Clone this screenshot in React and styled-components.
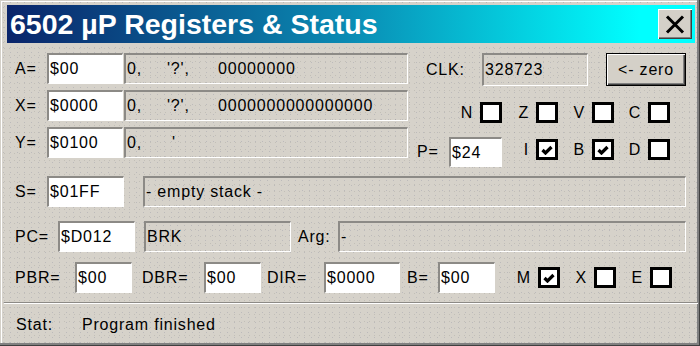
import React from 'react'
import styled, {createGlobalStyle} from 'styled-components'

const GlobalStyle = createGlobalStyle`
  html, body { margin: 0; padding: 0; background: #d4d0c8; }
  body { font-family: "Liberation Sans", Arial, sans-serif; }
`

const dither = `
  background-color: #d6d2ca;
  background-image:
    radial-gradient(circle, rgba(140,140,160,0.35) 0.6px, transparent 0.9px),
    radial-gradient(circle, rgba(150,145,140,0.3) 0.6px, transparent 0.9px);
  background-size: 7px 5px, 5px 7px;
  background-position: 0 0, 2px 3px;
`

const Window = styled.div`
  width: 700px;
  height: 346px;
  box-sizing: border-box;
  padding: 5px 5px 0 7px;
  display: flex;
  flex-direction: column;
  ${dither}
  box-shadow: inset -1px -1px #404040, inset -3px -3px #808080, inset 1px 1px #d4d0c8, inset 2px 2px #fff;
`

const TitleBar = styled.div`
  height: 38px;
  display: flex;
  align-items: center;
  justify-content: space-between;
  padding: 0 3px;
  background: linear-gradient(90deg, #0a246a 0%, #0a8cb4 50%, #00ffff 92%);
`

const TitleText = styled.span`
  color: #fff;
  font-weight: bold;
  font-size: 28.5px;
  line-height: 38px;
`

const CloseButton = styled.div`
  width: 34px;
  height: 30px;
  background: #d4d0c8;
  box-shadow: inset 1px 1px #fff, inset -1px -1px #404040, inset -2px -2px #808080;
  display: flex;
  align-items: center;
  justify-content: center;
`

const Body = styled.div`
  padding: 10px 9px 0 8px;
  display: flex;
  flex-direction: column;
`

const Top = styled.div`
  display: flex;
  align-items: flex-start;
`

const LeftCol = styled.div`
  width: 394px;
  display: flex;
  flex-direction: column;
  gap: 6px;
`

const Row = styled.div`
  display: flex;
  height: ${p => p.$h || 31}px;
  margin-top: ${p => p.$mt || 0}px;
  align-items: stretch;
`

const Label = styled.span`
  width: ${p => p.$w}px;
  margin-left: ${p => p.$ml || 0}px;
  flex-shrink: 0;
  display: flex;
  align-items: center;
  font-size: 16px;
  letter-spacing: 0.8px;
  color: #000;
`

const sunken = `
  box-sizing: border-box;
  border-top: 2px solid #8c8a86;
  border-left: 2px solid #8c8a86;
  border-bottom: 1px solid #fff;
  border-right: 1px solid #fff;
`

const ValueBox = styled.div`
  ${sunken}
  width: ${p => p.$w}px;
  flex-shrink: 0;
  background: #fff;
  display: flex;
  align-items: center;
  padding-left: 1px;
  font-size: 16px;
  letter-spacing: 0.8px;
  color: #000;
`

const Field = styled.div`
  ${sunken}
  ${dither}
  width: ${p => (p.$w ? p.$w + 'px' : 'auto')};
  flex: ${p => (p.$w ? '0 0 auto' : '1')};
  margin-left: ${p => p.$ml || 0}px;
  display: flex;
  align-items: center;
  padding-left: 1px;
  font-size: 16px;
  letter-spacing: 0.8px;
  color: #000;
  white-space: pre;
  overflow: hidden;
`

const Cell = styled.span`
  width: ${p => p.$w}px;
  padding-left: ${p => p.$pl || 0}px;
  box-sizing: border-box;
  flex-shrink: 0;
`

const RightCol = styled.div`
  width: 269px;
  margin-left: 9px;
  display: flex;
  flex-direction: column;
`

const ZeroButton = styled.div`
  width: 80px;
  height: 33px;
  margin-left: 18px;
  box-sizing: border-box;
  border: 1px solid #000;
  background: #d4d0c8;
  box-shadow: inset 1px 1px #fff, inset -1px -1px #404040, inset -2px -2px #808080;
  display: flex;
  align-items: center;
  justify-content: center;
  font-size: 16px;
  letter-spacing: 0.8px;
`

const FlagRow = styled.div`
  display: flex;
  justify-content: flex-end;
  align-items: ${p => p.$align || 'center'};
  padding-right: ${p => p.$pr || 0}px;
  margin-top: ${p => p.$mt || 0}px;
  margin-left: ${p => p.$ml || 0};
  margin-right: ${p => p.$mr || 0}px;
`

const FlagItem = styled.div`
  width: 56px;
  display: flex;
  justify-content: flex-end;
  align-items: center;
  gap: 7px;
  font-size: 16px;
  letter-spacing: 0.8px;
`

const Box = styled.div`
  width: 22px;
  height: 21px;
  box-sizing: border-box;
  border: 3px solid #000;
  background: #fff;
  display: flex;
  align-items: center;
  justify-content: center;
`

const Separator = styled.div`
  margin: 9px -3px 0 -3px;
  height: 1px;
  background: #8c8a86;
  border-bottom: 1px solid #fff;
`

const StatRow = styled.div`
  display: flex;
  align-items: center;
  height: 44px;
  padding-left: 9px;
  font-size: 16px;
  letter-spacing: 0.8px;
`

const Check = () => (
  <svg width="12" height="10" viewBox="0 0 12 10">
    <polyline points="1.5,5 4.5,8 10.5,2" fill="none" stroke="#000" strokeWidth="3.2" />
  </svg>
)

const Flag = ({name, on}) => (
  <FlagItem>
    <span>{name}</span>
    <Box>{on ? <Check /> : null}</Box>
  </FlagItem>
)

const regs = [
  {name: 'A=', val: '$00', ch: "'?',", bin: '00000000'},
  {name: 'X=', val: '$0000', ch: "'?',", bin: '0000000000000000'},
  {name: 'Y=', val: '$0100', ch: "'", bin: '', indent: 5},
]

export default function App() {
  return (
    <>
      <GlobalStyle />
      <Window>
        <TitleBar>
          <TitleText>6502 µP Registers &amp; Status</TitleText>
          <CloseButton>
            <svg width="20" height="19" viewBox="0 0 20 19">
              <path d="M2 1.5 L18 17.5 M18 1.5 L2 17.5" stroke="#000" strokeWidth="3" />
            </svg>
          </CloseButton>
        </TitleBar>
        <Body>
          <Top>
            <LeftCol>
              {regs.map(r => (
                <Row key={r.name}>
                  <Label $w={32}>{r.name}</Label>
                  <ValueBox $w={76}>{r.val}</ValueBox>
                  <Field $ml={1}>
                    <Cell $w={40}>0,</Cell>
                    <Cell $w={51} $pl={r.indent}>{r.ch}</Cell>
                    <Cell $w={170}>{r.bin}</Cell>
                  </Field>
                </Row>
              ))}
            </LeftCol>
            <RightCol>
              <Row $h={33}>
                <Label $w={56} $ml={9}>CLK:</Label>
                <Field $w={106}>328723</Field>
                <ZeroButton>&lt;- zero</ZeroButton>
              </Row>
              <FlagRow $mt={16} $pr={16}>
                <Flag name="N" />
                <Flag name="Z" />
                <Flag name="V" />
                <Flag name="C" />
              </FlagRow>
              <FlagRow $mt={14} $pr={16} $align="flex-start">
                <Row $h={30}>
                  <Label $w={32}>P=</Label>
                  <ValueBox $w={53}>$24</ValueBox>
                </Row>
                <FlagRow $mt={2}>
                  <Flag name="I" on />
                  <Flag name="B" on />
                  <Flag name="D" />
                </FlagRow>
              </FlagRow>
            </RightCol>
          </Top>
          <Row $mt={9}>
            <Label $w={32}>S=</Label>
            <ValueBox $w={77}>$01FF</ValueBox>
            <Field $ml={19}>- empty stack -</Field>
          </Row>
          <Row $mt={14}>
            <Label $w={43}>PC=</Label>
            <ValueBox $w={77}>$D012</ValueBox>
            <Field $w={147} $ml={9}>BRK</Field>
            <Label $w={40} $ml={7}>Arg:</Label>
            <Field>-</Field>
          </Row>
          <Row $mt={10}>
            <Label $w={60}>PBR=</Label>
            <ValueBox $w={57}>$00</ValueBox>
            <Label $w={62} $ml={10}>DBR=</Label>
            <ValueBox $w={57}>$00</ValueBox>
            <Label $w={57} $ml={6}>DIR=</Label>
            <ValueBox $w={76}>$0000</ValueBox>
            <Label $w={31} $ml={7}>B=</Label>
            <ValueBox $w={57}>$00</ValueBox>
            <FlagRow $ml="auto" $mr={14}>
              <Flag name="M" on />
              <Flag name="X" />
              <Flag name="E" />
            </FlagRow>
          </Row>
        </Body>
        <Separator />
        <StatRow>
          <Label $w={66}>Stat:</Label>
          <span>Program finished</span>
        </StatRow>
      </Window>
    </>
  )
}
